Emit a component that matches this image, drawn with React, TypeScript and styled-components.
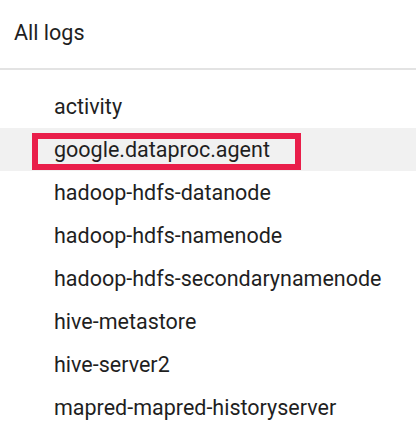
import React from "react";
import styled, { createGlobalStyle } from "styled-components";

const Global = createGlobalStyle`
  html, body { margin: 0; padding: 0; background: #ffffff; }
  body { font-family: Roboto, "Liberation Sans", Arial, sans-serif; }
`;

const Panel = styled.div`
  width: 416px;
  height: 432px;
  overflow: hidden;
  background: #ffffff;
  display: flex;
  flex-direction: column;
`;

const Header = styled.div`
  height: 70px;
  box-sizing: border-box;
  display: flex;
  align-items: center;
  padding: 0 0 3px 14px;
  font-size: 21.5px;
  color: #1f1f1f;
  border-bottom: 2px solid #e3e3e3;
`;

const List = styled.ul`
  list-style: none;
  margin: 0;
  padding: 15px 0 0;
`;

const Row = styled.li<{ $active?: boolean }>`
  position: relative;
  height: 43px;
  display: flex;
  align-items: center;
  padding: 0 0 1px 54px;
  box-sizing: border-box;
  font-size: 21.5px;
  color: #1f1f1f;
  background: ${(p) => (p.$active ? "#f1f1f1" : "transparent")};
`;

const Callout = styled.span`
  position: absolute;
  left: 32px;
  top: 5px;
  width: 269px;
  height: 37px;
  box-sizing: border-box;
  border: 6px solid #e91e4a;
  pointer-events: none;
`;

const logs = [
  "activity",
  "google.dataproc.agent",
  "hadoop-hdfs-datanode",
  "hadoop-hdfs-namenode",
  "hadoop-hdfs-secondarynamenode",
  "hive-metastore",
  "hive-server2",
  "mapred-mapred-historyserver",
];

export default function App() {
  return (
    <Panel>
      <Global />
      <Header>All logs</Header>
      <List>
        {logs.map((name) => {
          const active = name === "google.dataproc.agent";
          return (
            <Row key={name} $active={active}>
              {name}
              {active && <Callout />}
            </Row>
          );
        })}
      </List>
    </Panel>
  );
}
